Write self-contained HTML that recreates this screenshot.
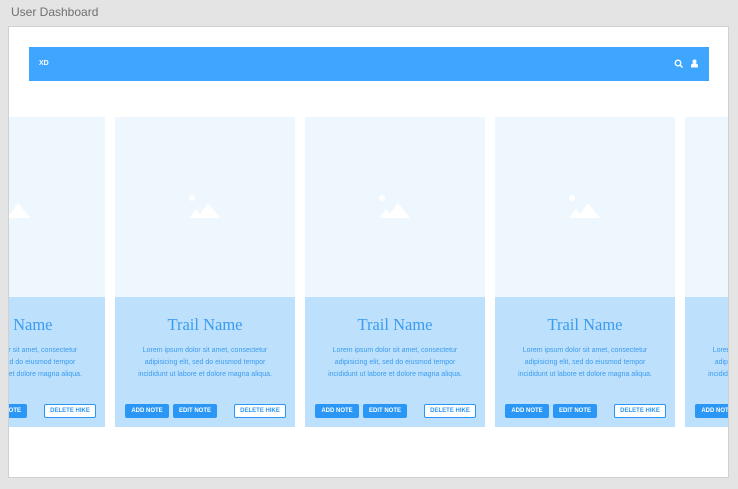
<!DOCTYPE html>
<html><head><style>
*{margin:0;padding:0;box-sizing:border-box}
body{width:738px;height:489px;background:#e4e4e4;position:relative;overflow:hidden;font-family:"Liberation Sans",sans-serif}
.t{position:absolute;left:11px;top:5px;font-size:12px;color:#707070}
.f{position:absolute;left:8px;top:26px;width:721px;height:452px;background:#fff;border:1px solid #d0d0d0;overflow:hidden}
.h{position:absolute;left:20px;top:20px;width:680px;height:34px;background:#3ea6fe}
.h b{position:absolute;left:10px;top:13px;font-size:7px;color:#fff}
.c{position:absolute;top:90px;width:180px;height:310px}
.im{height:180px;background:#eef7fe;position:relative}
.bd{height:130px;background:#bde0fc;position:relative;text-align:center}
.bd h2{font-family:"Liberation Serif",serif;font-weight:normal;font-size:16.5px;color:#3a9cf0;padding-top:18px}
.bd p{font-size:7px;line-height:12px;color:#3a9cf0;margin-top:10px}
.btn{position:absolute;top:107px;height:14px;font-size:6px;font-weight:bold;line-height:14px;text-align:center;border-radius:2px}
.a{background:#2a96f5;color:#fff;width:44px}
.d{background:#fff;color:#2a96f5;border:1px solid #2a96f5;width:52px;left:119px;line-height:12px}
</style></head><body>
<div class="t">User Dashboard</div>
<div class="f">
<div class="h"><b>XD</b>
<svg style="position:absolute;left:645px;top:12px" width="10" height="10" viewBox="0 0 10 10"><circle cx="4" cy="4" r="2.8" fill="none" stroke="#fff" stroke-width="1.3"/><path d="M6 6l2.5 2.5" stroke="#fff" stroke-width="1.4"/></svg>
<svg style="position:absolute;left:661px;top:12px" width="9" height="9" viewBox="0 0 9 9"><circle cx="4.5" cy="2.5" r="2" fill="#fff"/><path d="M1 8.5v-2c0-1 1-2 2-2h3c1 0 2 1 2 2v2z" fill="#fff"/></svg>
</div>
<div id="cards"></div>
</div>
<script>
var xs=[-84,106,296,486,676],h='';
xs.forEach(function(x){h+='<div class="c" style="left:'+x+'px"><div class="im"><svg style="position:absolute;left:72px;top:77px" width="34" height="25" viewBox="0 0 34 25"><circle cx="5" cy="4" r="3" fill="#fff"/><path d="M2 24l7-9 4 5 8-11 12 15z" fill="#fff"/></svg></div><div class="bd"><h2>Trail Name</h2><p>Lorem ipsum dolor sit amet, consectetur<br>adipisicing elit, sed do eiusmod tempor<br>incididunt ut labore et dolore magna aliqua.</p><div class="btn a" style="left:10px">ADD NOTE</div><div class="btn a" style="left:58px">EDIT NOTE</div><div class="btn d">DELETE HIKE</div></div></div>'});
document.getElementById('cards').innerHTML=h;
</script>
</body></html>
